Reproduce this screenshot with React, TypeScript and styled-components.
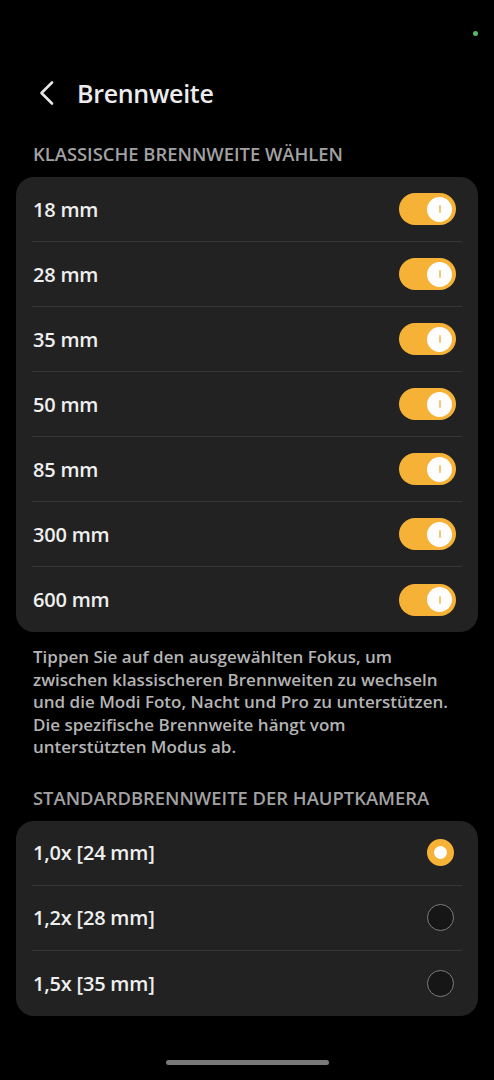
import React, { useState } from 'react';
import styled, { createGlobalStyle } from 'styled-components';

const GlobalStyle = createGlobalStyle`
  html, body {
    margin: 0;
    padding: 0;
    background: #000;
  }
  body {
    font-family: 'Open Sans', 'Noto Sans', sans-serif;
    -webkit-font-smoothing: antialiased;
  }
`;

const focalLengths = ['18 mm', '28 mm', '35 mm', '50 mm', '85 mm', '300 mm', '600 mm'];
const mainCamera = ['1,0x [24 mm]', '1,2x [28 mm]', '1,5x [35 mm]'];

const App = () => {
  const [enabled, setEnabled] = useState<boolean[]>(focalLengths.map(() => true));
  const [selected, setSelected] = useState(0);

  return (
    <Page>
      <GlobalStyle />
      <StatusBar>
        <Dot />
      </StatusBar>
      <Header>
        <BackButton aria-label="Zurück">
          <svg width="18" height="26" viewBox="0 0 18 26" fill="none">
            <path
              d="M14 2.5 L3.5 13 L14 23.5"
              stroke="#e6e6e6"
              strokeWidth="2.6"
              strokeLinecap="round"
              strokeLinejoin="round"
            />
          </svg>
        </BackButton>
        <Title>Brennweite</Title>
      </Header>

      <SectionLabel>KLASSISCHE BRENNWEITE WÄHLEN</SectionLabel>
      <Card>
        {focalLengths.map((label, i) => (
          <Row key={label} $last={i === focalLengths.length - 1}>
            <RowText>{label}</RowText>
            <Toggle
              $on={enabled[i]}
              onClick={() =>
                setEnabled((prev) => prev.map((v, j) => (j === i ? !v : v)))
              }
            >
              <Thumb>
                <ThumbMark $on={enabled[i]} />
              </Thumb>
            </Toggle>
          </Row>
        ))}
      </Card>

      <Description>
        Tippen Sie auf den ausgewählten Fokus, um
        <br />
        zwischen klassischeren Brennweiten zu wechseln
        <br />
        und die Modi Foto, Nacht und Pro zu unterstützen.
        <br />
        Die spezifische Brennweite hängt vom
        <br />
        unterstützten Modus ab.
      </Description>

      <SectionLabel $top={28}>STANDARDBRENNWEITE DER HAUPTKAMERA</SectionLabel>
      <Card>
        {mainCamera.map((label, i) => (
          <Row key={label} $last={i === mainCamera.length - 1} onClick={() => setSelected(i)}>
            <RowText>{label}</RowText>
            <Radio $checked={selected === i} />
          </Row>
        ))}
      </Card>

      <HomeBar />
    </Page>
  );
};

export default App;

const Page = styled.div`
  width: 494px;
  min-height: 1080px;
  background: #000;
  display: flex;
  flex-direction: column;
  box-sizing: border-box;
`;

const StatusBar = styled.div`
  height: 64px;
  display: flex;
  justify-content: flex-end;
  align-items: flex-start;
  padding: 31px 16px 0 0;
  box-sizing: border-box;
`;

const Dot = styled.div`
  width: 5px;
  height: 5px;
  border-radius: 50%;
  background: #5cb860;
`;

const Header = styled.div`
  height: 58px;
  display: flex;
  align-items: center;
  padding-left: 38px;
`;

const BackButton = styled.div`
  width: 18px;
  height: 26px;
  display: flex;
  align-items: center;
  justify-content: center;
  margin-right: 21px;
  cursor: pointer;
`;

const Title = styled.div`
  color: #ececec;
  font-size: 25px;
  font-weight: 600;
  letter-spacing: -0.3px;
`;

const SectionLabel = styled.div<{ $top?: number }>`
  margin: ${({ $top }) => $top ?? 21}px 0 12px 33px;
  line-height: 22px;
  color: #a2a2a2;
  font-size: 18.4px;
  font-weight: 600;
`;

const Card = styled.div`
  margin: 0 16px;
  background: #222222;
  border-radius: 18px;
  display: flex;
  flex-direction: column;
`;

const Row = styled.div<{ $last?: boolean }>`
  height: 65px;
  margin: 0 16px;
  padding: 0 0 0 1px;
  display: flex;
  align-items: center;
  justify-content: space-between;
  border-bottom: ${({ $last }) => ($last ? 'none' : '1px solid #363636')};
  box-sizing: border-box;
  cursor: pointer;
`;

const RowText = styled.div`
  color: #efefef;
  font-size: 20px;
  font-weight: 600;
  letter-spacing: -0.2px;
`;

const Toggle = styled.div<{ $on: boolean }>`
  width: 57px;
  height: 32px;
  border-radius: 16px;
  background: ${({ $on }) => ($on ? '#f5b236' : '#5a5a5a')};
  display: flex;
  align-items: center;
  justify-content: ${({ $on }) => ($on ? 'flex-end' : 'flex-start')};
  padding: 0 4px;
  box-sizing: border-box;
  margin-right: 6px;
`;

const Thumb = styled.div`
  width: 25px;
  height: 25px;
  border-radius: 50%;
  background: #fdfdfd;
  display: flex;
  align-items: center;
  justify-content: center;
`;

const ThumbMark = styled.div<{ $on: boolean }>`
  width: 2px;
  height: 8px;
  border-radius: 1px;
  background: ${({ $on }) => ($on ? '#f3c777' : '#aaa')};
`;

const Radio = styled.div<{ $checked: boolean }>`
  width: 27px;
  height: 27px;
  border-radius: 50%;
  box-sizing: border-box;
  margin-right: 8px;
  background: ${({ $checked }) => ($checked ? '#fdfdfd' : '#161616')};
  border: ${({ $checked }) => ($checked ? '7px solid #f5b236' : '1.5px solid #7c7c7c')};
`;

const Description = styled.div`
  margin: 14px 20px 0 33px;
  color: #b4b4b4;
  font-size: 17px;
  font-weight: 600;
  line-height: 22.5px;
  white-space: nowrap;
`;

const HomeBar = styled.div`
  margin: 44px auto 0;
  width: 163px;
  height: 5px;
  border-radius: 3px;
  background: #7a7a7a;
`;
